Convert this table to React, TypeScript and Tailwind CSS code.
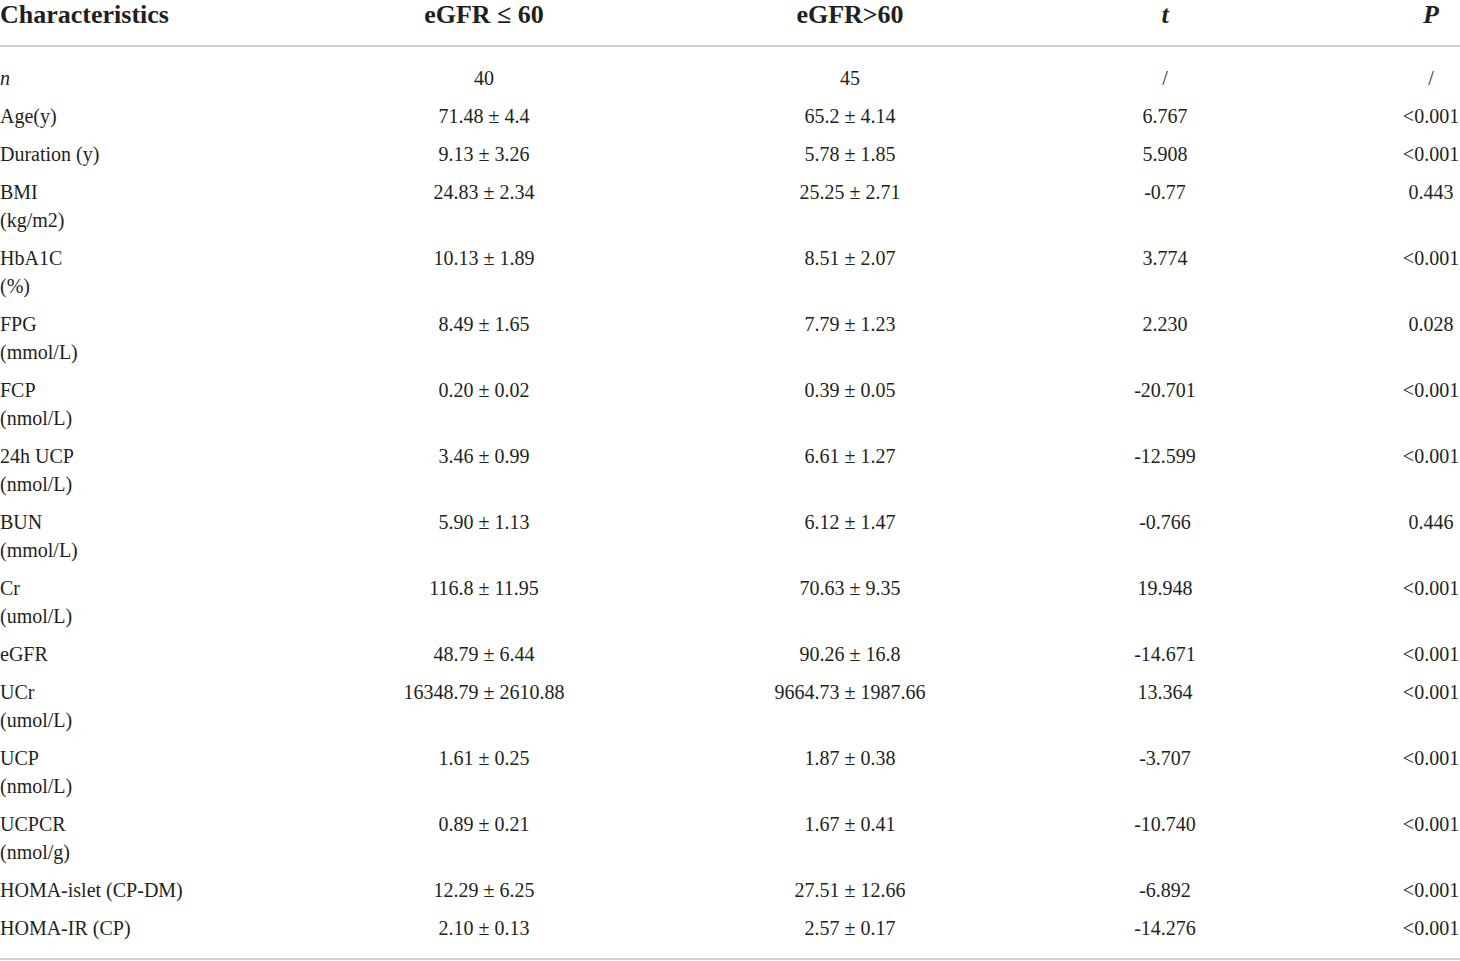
const COLS = "grid grid-cols-[196px_576px_156px_474px_58px]";

type Row = { label: string[]; a: string; b: string; t: string; p: string; italic?: boolean };

const ROWS: Row[] = [
  { label: ["n"], a: "40", b: "45", t: "/", p: "/", italic: true },
  { label: ["Age(y)"], a: "71.48 ± 4.4", b: "65.2 ± 4.14", t: "6.767", p: "<0.001" },
  { label: ["Duration (y)"], a: "9.13 ± 3.26", b: "5.78 ± 1.85", t: "5.908", p: "<0.001" },
  { label: ["BMI", "(kg/m2)"], a: "24.83 ± 2.34", b: "25.25 ± 2.71", t: "-0.77", p: "0.443" },
  { label: ["HbA1C", "(%)"], a: "10.13 ± 1.89", b: "8.51 ± 2.07", t: "3.774", p: "<0.001" },
  { label: ["FPG", "(mmol/L)"], a: "8.49 ± 1.65", b: "7.79 ± 1.23", t: "2.230", p: "0.028" },
  { label: ["FCP", "(nmol/L)"], a: "0.20 ± 0.02", b: "0.39 ± 0.05", t: "-20.701", p: "<0.001" },
  { label: ["24h UCP", "(nmol/L)"], a: "3.46 ± 0.99", b: "6.61 ± 1.27", t: "-12.599", p: "<0.001" },
  { label: ["BUN", "(mmol/L)"], a: "5.90 ± 1.13", b: "6.12 ± 1.47", t: "-0.766", p: "0.446" },
  { label: ["Cr", "(umol/L)"], a: "116.8 ± 11.95", b: "70.63 ± 9.35", t: "19.948", p: "<0.001" },
  { label: ["eGFR"], a: "48.79 ± 6.44", b: "90.26 ± 16.8", t: "-14.671", p: "<0.001" },
  { label: ["UCr", "(umol/L)"], a: "16348.79 ± 2610.88", b: "9664.73 ± 1987.66", t: "13.364", p: "<0.001" },
  { label: ["UCP", "(nmol/L)"], a: "1.61 ± 0.25", b: "1.87 ± 0.38", t: "-3.707", p: "<0.001" },
  { label: ["UCPCR", "(nmol/g)"], a: "0.89 ± 0.21", b: "1.67 ± 0.41", t: "-10.740", p: "<0.001" },
  { label: ["HOMA-islet (CP-DM)"], a: "12.29 ± 6.25", b: "27.51 ± 12.66", t: "-6.892", p: "<0.001" },
  { label: ["HOMA-IR (CP)"], a: "2.10 ± 0.13", b: "2.57 ± 0.17", t: "-14.276", p: "<0.001" },
];

export default function App() {
  return (
    <div className="w-[1460px] h-[961px] bg-white text-[#231f20] font-['Liberation_Serif',serif]">
      {/* header */}
      <div className={`${COLS} h-[47px] border-b-2 border-[#d0d0d0] text-[26px] leading-[29px] font-bold`}>
        <div className="whitespace-nowrap">Characteristics</div>
        <div className="text-center whitespace-nowrap">eGFR ≤ 60</div>
        <div className="text-center whitespace-nowrap">eGFR&gt;60</div>
        <div className="text-center italic">t</div>
        <div className="text-center italic">P</div>
      </div>

      {/* body */}
      <div className="pt-[12px] pb-[11px] border-b-2 border-[#d0d0d0] text-[20px] leading-[28px]">
        {ROWS.map((r) => (
          <div key={r.label.join(" ")} className={`${COLS} py-[5px]`}>
            <div className={`whitespace-nowrap ${r.italic ? "italic" : ""}`}>
              {r.label.map((l) => (
                <div key={l}>{l}</div>
              ))}
            </div>
            <div className="text-center whitespace-nowrap">{r.a}</div>
            <div className="text-center whitespace-nowrap">{r.b}</div>
            <div className="text-center whitespace-nowrap">{r.t}</div>
            <div className="text-center whitespace-nowrap">{r.p}</div>
          </div>
        ))}
      </div>
    </div>
  );
}
